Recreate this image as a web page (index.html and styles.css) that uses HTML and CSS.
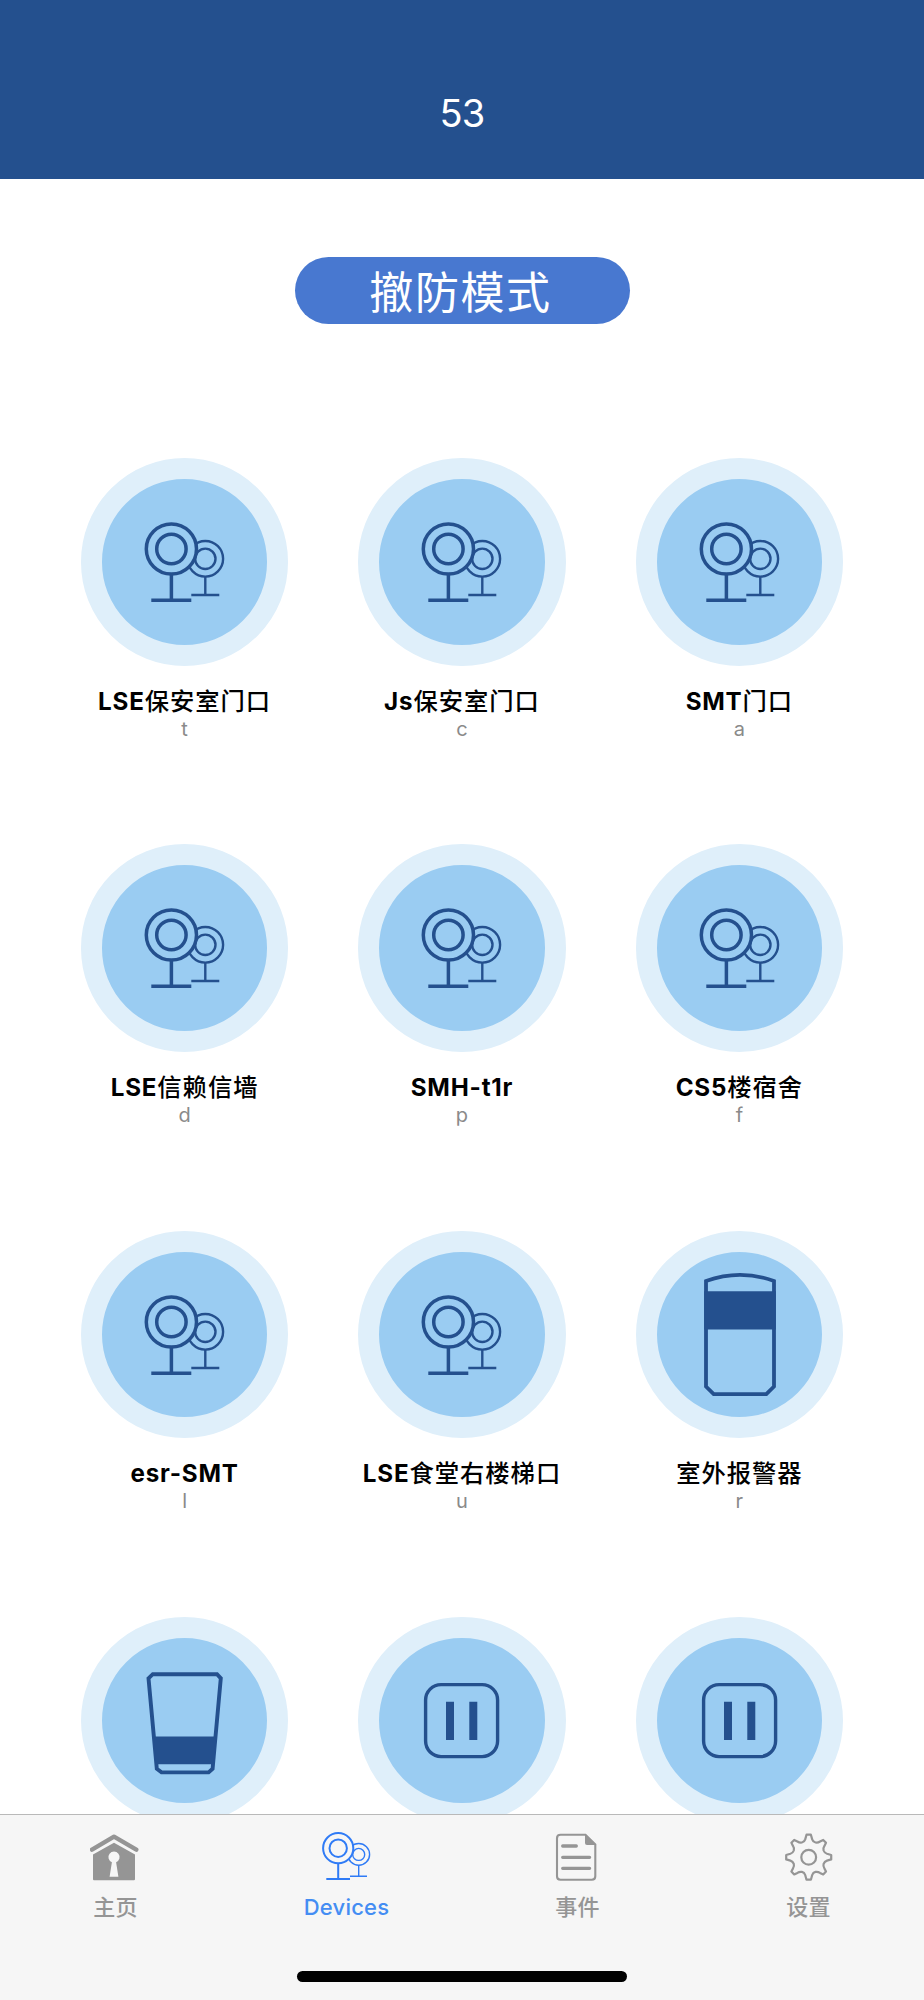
FILE: index.html
```html
<!DOCTYPE html>
<html lang="zh-CN">
<head>
<meta charset="utf-8">
<title>53</title>
<link rel="stylesheet" href="styles.css">
</head>
<body>
<svg class="defs" aria-hidden="true">
  <symbol id="i-camera" viewBox="0 0 208 208">
    <g fill="none" stroke="currentColor">
      <g stroke-width="2.4"><circle cx="124.3" cy="100.8" r="17.8"/><circle cx="124.3" cy="100.8" r="10.2"/><path d="M124.3 118.7V137M110.3 137H138.3"/></g>
      <g stroke-width="3.5"><circle cx="90.4" cy="91" r="25.1" fill="#9accf2"/><circle cx="90.4" cy="91" r="14.7"/><path d="M90.4 116.3V142M70.3 142.2H110.3"/></g>
    </g>
  </symbol>
  <symbol id="i-siren" viewBox="0 0 208 208">
    <path d="M70 50Q104 37.6 138 50V155.5L130.3 163.2H77.7L70 155.5Z" fill="none" stroke="currentColor" stroke-width="3.8"/>
    <path d="M68.2 60.2H139.8V98.5H68.2Z" fill="currentColor"/>
  </symbol>
  <symbol id="i-sensor" viewBox="0 0 208 208">
    <path d="M67.5 61.3L71.8 57.2H136L139.8 61.3L131.6 151.8L127.6 155.4H80.5L75.8 151.8Z" fill="none" stroke="currentColor" stroke-width="3.9"/>
    <path d="M73 119.5H135L132.5 147.2H75Z" fill="currentColor"/>
  </symbol>
  <symbol id="i-switch" viewBox="0 0 208 208">
    <rect x="67.6" y="67.6" width="72" height="72" rx="15.5" fill="none" stroke="currentColor" stroke-width="3.4"/>
    <path d="M88 84.7H96V123H88ZM111.3 84.7H119.3V123H111.3Z" fill="currentColor"/>
  </symbol>
</svg>

<div class="screen">
  <header class="navbar"><h1 class="navbar-title">53</h1></header>

  <main class="content">
    <button class="mode">撤防模式</button>
    <section class="grid">
      <div class="device"><div class="disc"><svg><use href="#i-camera"/></svg></div><div class="name"><b>LSE</b>保安室门口</div><div class="sub">t</div></div>
      <div class="device"><div class="disc"><svg><use href="#i-camera"/></svg></div><div class="name"><b>Js</b>保安室门口</div><div class="sub">c</div></div>
      <div class="device"><div class="disc"><svg><use href="#i-camera"/></svg></div><div class="name"><b>SMT</b>门口</div><div class="sub">a</div></div>
      <div class="device"><div class="disc"><svg><use href="#i-camera"/></svg></div><div class="name"><b>LSE</b>信赖信墙</div><div class="sub">d</div></div>
      <div class="device"><div class="disc"><svg><use href="#i-camera"/></svg></div><div class="name"><b>SMH-t1r</b></div><div class="sub">p</div></div>
      <div class="device"><div class="disc"><svg><use href="#i-camera"/></svg></div><div class="name"><b>CS5</b>楼宿舍</div><div class="sub">f</div></div>
      <div class="device"><div class="disc"><svg><use href="#i-camera"/></svg></div><div class="name"><b>esr-SMT</b></div><div class="sub">l</div></div>
      <div class="device"><div class="disc"><svg><use href="#i-camera"/></svg></div><div class="name"><b>LSE</b>食堂右楼梯口</div><div class="sub">u</div></div>
      <div class="device"><div class="disc"><svg><use href="#i-siren"/></svg></div><div class="name">室外报警器</div><div class="sub">r</div></div>
      <div class="device"><div class="disc"><svg><use href="#i-sensor"/></svg></div></div>
      <div class="device"><div class="disc"><svg><use href="#i-switch"/></svg></div></div>
      <div class="device"><div class="disc"><svg><use href="#i-switch"/></svg></div></div>
    </section>
  </main>

  <footer class="tabbar">
    <nav class="tabs">
      <a class="tab">
        <svg viewBox="0 0 51 51"><path d="M2 17.6L24 4.7L46.3 17.6" fill="none" stroke="currentColor" stroke-width="4.4" stroke-linecap="round" stroke-linejoin="round"/><path fill="currentColor" fill-rule="evenodd" d="M24 10.7L45 22.6V47.3Q45 48.3 44 48.3H4Q3 48.3 3 47.3V22.6ZM21.9 30.3L19.6 44.8H28.4L26.1 30.3A5.6 5.6 0 1 0 21.9 30.3Z"/></svg>
        <span>主页</span>
      </a>
      <a class="tab active">
        <svg viewBox="0 0 51 51"><g fill="none" stroke="currentColor"><g stroke-width="1.4"><circle cx="37.7" cy="22.4" r="10.9"/><circle cx="37.7" cy="22.4" r="6"/><path d="M37.7 33.3V44.3M29 44.3H46"/></g><g stroke-width="2"><circle cx="17.2" cy="16.2" r="15.1" fill="#f6f6f6"/><circle cx="17.2" cy="16.2" r="8.7"/><path d="M17.2 31.3V47M5.3 47H29"/></g></g></svg>
        <span>Devices</span>
      </a>
      <a class="tab">
        <svg viewBox="0 0 51 51"><path d="M33.5 2.7H8.5Q5 2.7 5 6.2V44.2Q5 47.7 8.5 47.7H39.8Q43.3 47.7 43.3 44.2V12.5Z" fill="none" stroke="currentColor" stroke-width="2.1"/><path d="M33 2L44.2 13H35Q33 13 33 11Z" fill="currentColor"/><path d="M10.7 14H24.3M10.7 25.3H37.6M10.7 36.3H37.6" stroke="currentColor" stroke-width="3.3" stroke-linecap="round"/></svg>
        <span>事件</span>
      </a>
      <a class="tab">
        <svg viewBox="0 0 51 51"><g fill="none" stroke="currentColor" stroke-width="2.2" stroke-linejoin="round"><circle cx="25.7" cy="25.2" r="7.4"/><path d="M23.5 2.7H27.9L29.2 7.4Q30 10 32.5 10.5Q34.8 11 37 9.5L40.2 7.9L43 10.8L41.3 14.2Q40 16 40.6 18.5Q41.5 21 44 21.8L48.2 23V27.4L44 28.6Q41.5 29.4 40.6 31.8Q40 34.4 41.3 36.2L43 39.5L40.2 42.5L37 40.9Q34.8 39.4 32.5 39.9Q30 40.4 29.2 43L27.9 47.7H23.5L22.2 43Q21.4 40.4 18.9 39.9Q16.6 39.4 14.4 40.9L11.2 42.5L8.4 39.5L10.1 36.2Q11.4 34.4 10.8 31.8Q9.9 29.4 7.4 28.6L3.2 27.4V23L7.4 21.8Q9.9 21 10.8 18.5Q11.4 16 10.1 14.2L8.4 10.8L11.2 7.9L14.4 9.5Q16.6 11 18.9 10.5Q21.4 10 22.2 7.4Z"/></g></svg>
        <span>设置</span>
      </a>
    </nav>
    <div class="home-bar"></div>
  </footer>
</div>
</body>
</html>
```

FILE: styles.css
```css
* { box-sizing: border-box; }
body {
  margin: 0;
  font-family: Inter, "Noto Sans CJK SC", sans-serif;
  background: #fff;
}
.defs { display: none; }
.screen {
  width: 924px;
  height: 2000px;
  overflow: hidden;
  display: flex;
  flex-direction: column;
}
.navbar {
  flex: none;
  height: 178.5px;
  padding-top: 90px;
  background: #24508e;
  text-align: center;
}
.navbar-title {
  margin: 0;
  color: #fff;
  font-size: 38px;
  font-weight: 400;
  line-height: 46px;
  letter-spacing: -0.9px;
}
.content {
  flex: none;
  height: 1635.5px;
  overflow: hidden;
  display: flex;
  flex-direction: column;
  align-items: center;
  padding-top: 78.2px;
}
.mode {
  flex: none;
  width: 335px;
  height: 67px;
  padding: 0 3px 0 0;
  border: 0;
  border-radius: 34px;
  background: #4878d0;
  color: #fff;
  font: 400 44px/66px "Noto Sans CJK SC", sans-serif;
  letter-spacing: 1.6px;
}
.grid {
  flex: none;
  margin-top: 134.4px;
  width: 832.2px;
  display: grid;
  grid-template-columns: repeat(3, 277.4px);
  grid-auto-rows: 386.3px;
}
.device {
  display: flex;
  flex-direction: column;
  align-items: center;
}
.disc {
  flex: none;
  width: 207.5px;
  height: 207.5px;
  border: 21px solid #dfeffa;
  border-radius: 50%;
  background: #9accf2;
  color: #24508e;
}
.disc svg {
  display: block;
  width: 208px;
  height: 208px;
  margin: -21px;
}
.name {
  margin-top: 16px;
  height: 37px;
  color: #000;
  font: 500 24.3px/36px "Noto Sans CJK SC", sans-serif;
  letter-spacing: 1px;
  white-space: nowrap;
}
.name b {
  font-family: Inter, sans-serif;
  font-size: 24.2px;
  font-weight: 700;
  letter-spacing: 0.8px;
  margin-right: 4.5px;
}
.name b:last-child { margin-right: 0; }
.sub {
  color: #8a8a8a;
  font-size: 20px;
  line-height: 20px;
}
.tabbar {
  flex: 1;
  display: flex;
  flex-direction: column;
  align-items: center;
  background: #f6f6f6;
  border-top: 1px solid #b9b9b9;
}
.tabs {
  width: 100%;
  height: 156px;
  display: grid;
  grid-template-columns: repeat(4, 1fr);
}
.tab {
  display: flex;
  flex-direction: column;
  align-items: center;
  padding-top: 17px;
  color: #959595;
}
.tab svg { width: 51px; height: 51px; }
.tab span {
  margin-top: 8px;
  font: 500 22px/32px Inter, "Noto Sans CJK SC", sans-serif;
  letter-spacing: 0.2px;
}
.tab.active svg { color: #2f7bf6; }
.tab.active span { color: #448df3; }
.home-bar {
  width: 330px;
  height: 11px;
  border-radius: 6px;
  background: #000;
}
```
